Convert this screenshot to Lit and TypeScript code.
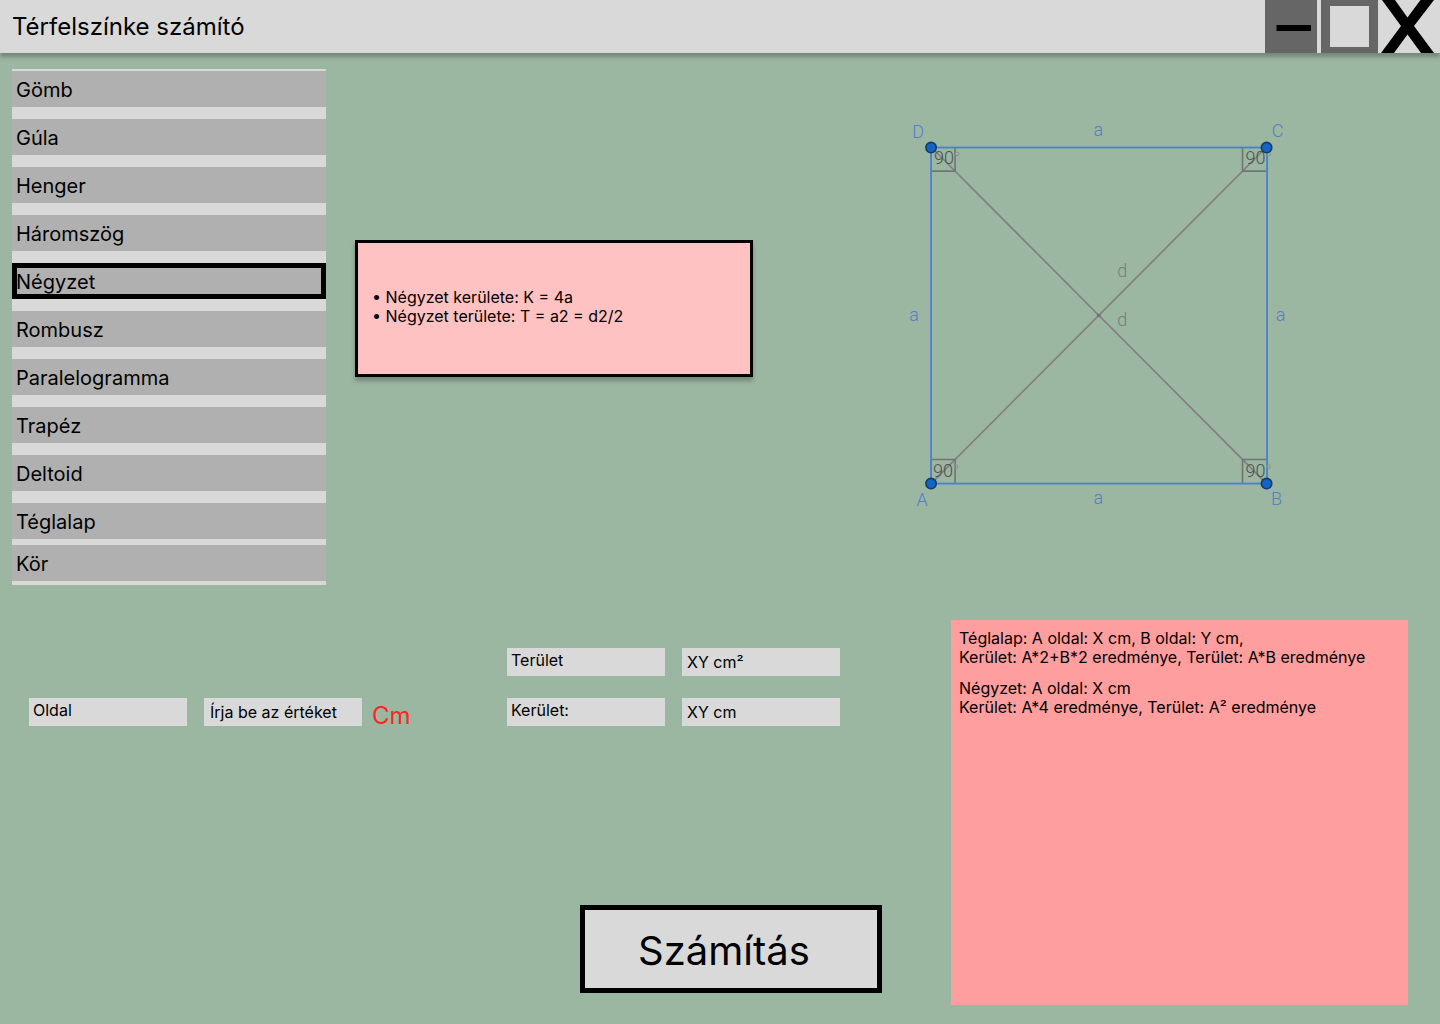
import { LitElement, html, css, svg } from "lit";
import { customElement, state } from "lit/decorators.js";
import { classMap } from "lit/directives/class-map.js";

const SHAPES = [
  "Gömb",
  "Gúla",
  "Henger",
  "Háromszög",
  "Négyzet",
  "Rombusz",
  "Paralelogramma",
  "Trapéz",
  "Deltoid",
  "Téglalap",
  "Kör",
];

@customElement("title-bar")
export class TitleBar extends LitElement {
  static styles = css`
    :host {
      display: block;
      position: relative;
    }
    .bar {
      display: flex;
      align-items: stretch;
      justify-content: space-between;
      height: 53px;
      background: #d9d9d9;
      box-shadow: 0 4px 4px rgba(0, 0, 0, 0.25);
    }
    .title {
      margin: 0;
      padding: 12px;
      font-size: 24px;
      line-height: 29px;
      font-weight: 400;
    }
    .controls {
      display: flex;
      gap: 4px;
      padding-right: 5px;
    }
    .control {
      display: block;
      border: 0;
      padding: 0;
      background: none;
      cursor: pointer;
    }
    .icon {
      display: block;
      overflow: visible;
    }
  `;

  render() {
    return html`
      <header class="bar">
        <h1 class="title">Térfelszínke számító</h1>
        <div class="controls">
          <button class="control" type="button" aria-label="Kis méret">
            <svg class="icon" width="52" height="53" viewBox="0 0 52 53">
              <rect width="52" height="53" fill="#666" />
              <rect x="11.5" y="25" width="34.5" height="6" />
            </svg>
          </button>
          <button class="control" type="button" aria-label="Teljes méret">
            <svg class="icon" width="57" height="53" viewBox="0 0 57 53">
              <path d="M0 0H57V53H0ZM9 6V47H48V6Z" fill="#666" fill-rule="evenodd" />
            </svg>
          </button>
          <button class="control" type="button" aria-label="Bezárás">
            <svg class="icon" width="53" height="53" viewBox="0 0 53 53">
              <path d="M0 0H13L25.5 17.5L38.5 0H52L32 26L52 53H39L25.5 34.5L12 53H-1L19 26Z" />
            </svg>
          </button>
        </div>
      </header>
    `;
  }
}

@customElement("shape-list")
export class ShapeList extends LitElement {
  static styles = css`
    :host {
      display: block;
    }
    .list {
      display: flex;
      flex-direction: column;
      gap: 12px;
      margin: 0;
      padding: 2px 0 4px;
      list-style: none;
      background: #d9d9d9;
    }
    .row:last-child {
      margin-top: -6px;
    }
    .item {
      display: block;
      width: 100%;
      height: 36px;
      border: 0;
      padding: 1px 4px 0;
      background: #b0b0b0;
      color: #000;
      font: inherit;
      font-size: 20px;
      line-height: 24px;
      text-align: left;
      cursor: pointer;
    }
    .selected {
      box-shadow: inset 0 0 0 5px #000;
    }
  `;

  @state() private selected = "Négyzet";

  render() {
    return html`
      <ul class="list">
        ${SHAPES.map(
          (name) => html`
            <li class="row">
              <button
                type="button"
                class=${classMap({ item: true, selected: name === this.selected })}
                aria-pressed=${name === this.selected ? "true" : "false"}
                @click=${() => (this.selected = name)}
              >${name}</button>
            </li>
          `
        )}
      </ul>
    `;
  }
}

@customElement("square-diagram")
export class SquareDiagram extends LitElement {
  static styles = css`
    :host {
      display: block;
    }
    .figure {
      display: block;
      width: 100%;
      font-family: Roboto, "Liberation Sans", sans-serif;
      font-weight: 300;
    }
    .side {
      fill: none;
      stroke: #4880d2;
      stroke-width: 1.8;
    }
    .diagonal {
      stroke: #837d80;
      stroke-width: 1.6;
    }
    .angle {
      fill: none;
      stroke: #6f7674;
      stroke-width: 1.6;
    }
    .vertex {
      fill: #1464c4;
      stroke: #143c6c;
      stroke-width: 1.6;
    }
    .label {
      fill: #5580c4;
      font-size: 18px;
      text-anchor: middle;
    }
    .inner {
      fill: #75807a;
      font-size: 18px;
      text-anchor: middle;
    }
    .degrees {
      fill: #4c5450;
      font-size: 18px;
    }
    .ring {
      fill: none;
      stroke: #87948d;
      stroke-width: 1;
    }
  `;

  render() {
    const labels: [string, number, number][] = [
      ["D", 23, 23],
      ["C", 382, 22],
      ["A", 27, 390],
      ["B", 381, 389],
      ["a", 203, 21],
      ["a", 203, 388],
      ["a", 19, 206],
      ["a", 385, 206],
    ];
    const corners: [number, number][] = [
      [36, 32.5],
      [371, 32.5],
      [371, 368],
      [36, 368],
    ];
    const degrees: [number, number][] = [
      [39, 49],
      [350, 49],
      [350, 361],
      [38, 361],
    ];
    return html`
      <svg class="figure" viewBox="0 0 400 400" role="img" aria-label="Négyzet">
        <path class="diagonal" d="M36 32L371 368" />
        <path class="diagonal" d="M371 32L36 368" />
        <path class="angle" d="M60 32V56H36M347 32V56H371M347 368V344H371M60 368V344H36" />
        <rect class="side" x="36" y="32.5" width="335.5" height="335.5" />
        ${degrees.map(
          ([x, y]) => svg`
            <text class="degrees" x=${x} y=${y}>90</text>
            <circle class="ring" cx=${x + 23} cy=${y - 10} r="1.8" />
          `
        )}
        ${labels.map(([t, x, y]) => svg`<text class="label" x=${x} y=${y}>${t}</text>`)}
        <text class="inner" x="227" y="162">d</text>
        <text class="inner" x="227" y="211">d</text>
        <circle cx="203.5" cy="200" r="1.6" fill="#66706b" />
        ${corners.map(([x, y]) => svg`<circle class="vertex" cx=${x} cy=${y} r="5.2" />`)}
      </svg>
    `;
  }
}

@customElement("app-root")
export class AppRoot extends LitElement {
  static styles = css`
    :host {
      display: flex;
      flex-direction: column;
      min-height: 100vh;
      background: #9bb6a1;
      color: #000;
      font-family: Inter, "Liberation Sans", sans-serif;
      font-size: 16px;
      line-height: 19px;
    }
    .content {
      display: flex;
      flex: 1;
      flex-direction: column;
      gap: 35px;
      padding: 16px 32px 19px 12px;
    }
    .overview {
      display: grid;
      grid-template-columns: minmax(0, 314fr) minmax(0, 398fr) minmax(0, 626fr);
      align-items: start;
      gap: 29px;
    }
    .formulas {
      display: flex;
      align-items: center;
      box-sizing: border-box;
      min-height: 137px;
      margin-top: 171px;
      padding: 0 14px 4px;
      border: 3px solid #000;
      background: #ffc2c2;
      box-shadow: 0 4px 4px rgba(0, 0, 0, 0.25);
    }
    .formula-list {
      margin: 0;
      padding: 0;
      list-style: none;
    }
    .formula-list li::before {
      content: "• ";
    }
    .diagram {
      width: 64%;
      margin: 46px auto 0;
    }
    .workspace {
      display: grid;
      flex: 1;
      grid-template-columns: minmax(0, 939fr) minmax(0, 457fr);
    }
    .calculator {
      display: grid;
      grid-template-columns: minmax(0, 478fr) minmax(0, 444fr);
      grid-template-rows: auto 1fr;
      padding: 28px 0 12px 17px;
    }
    .field {
      display: flex;
      gap: 17px;
    }
    .entry {
      align-self: end;
    }
    .results {
      display: flex;
      flex-direction: column;
      gap: 22px;
    }
    .name,
    .value {
      box-sizing: border-box;
      width: 158px;
      height: 28px;
      background: #d9d9d9;
    }
    .name {
      padding: 3px 4px;
    }
    .value {
      border: 0;
      border-radius: 0;
      padding: 5px 5px 4px;
      color: #000;
      font: inherit;
      line-height: 19px;
    }
    input.value {
      padding: 4px 6px 5px;
    }
    .value::placeholder {
      color: #000;
      opacity: 1;
    }
    .measure {
      display: flex;
      gap: 10px;
    }
    .unit {
      padding-top: 4px;
      color: #ff2424;
      font-size: 24px;
      line-height: 28px;
      height: 24px;
    }
    .submit {
      grid-column: 2;
      align-self: end;
      box-sizing: border-box;
      width: 302px;
      height: 88px;
      margin-left: 73px;
      border: 5px solid #000;
      padding: 4px 14px 0 0;
      background: #d9d9d9;
      color: #000;
      font: inherit;
      font-size: 40px;
      line-height: 48px;
      cursor: pointer;
    }
    .history {
      padding: 9px 8px;
      background: #ff9e9e;
    }
    .record {
      margin: 0 0 12px;
    }
  `;

  render() {
    return html`
      <title-bar></title-bar>
      <main class="content">
        <section class="overview">
          <shape-list></shape-list>
          <div class="formulas">
            <ul class="formula-list">
              <li>Négyzet kerülete: K = 4a</li>
              <li>Négyzet területe: T = a2 = d2/2</li>
            </ul>
          </div>
          <square-diagram class="diagram"></square-diagram>
        </section>
        <section class="workspace">
          <form class="calculator" @submit=${(e: Event) => e.preventDefault()}>
            <div class="field entry">
              <label class="name" for="side">Oldal</label>
              <div class="measure">
                <input class="value" id="side" type="text" inputmode="decimal" placeholder="Írja be az értéket" />
                <span class="unit">Cm</span>
              </div>
            </div>
            <div class="results">
              <div class="field">
                <label class="name" for="area">Terület</label>
                <output class="value" id="area">XY cm²</output>
              </div>
              <div class="field">
                <label class="name" for="perimeter">Kerület:</label>
                <output class="value" id="perimeter">XY cm</output>
              </div>
            </div>
            <button class="submit" type="submit">Számítás</button>
          </form>
          <aside class="history">
            <p class="record">
              Téglalap: A oldal: X cm, B oldal: Y cm,<br />
              Kerület: A*2+B*2 eredménye, Terület: A*B eredménye
            </p>
            <p class="record">
              Négyzet: A oldal: X cm<br />
              Kerület: A*4 eredménye, Terület: A² eredménye
            </p>
          </aside>
        </section>
      </main>
    `;
  }
}
